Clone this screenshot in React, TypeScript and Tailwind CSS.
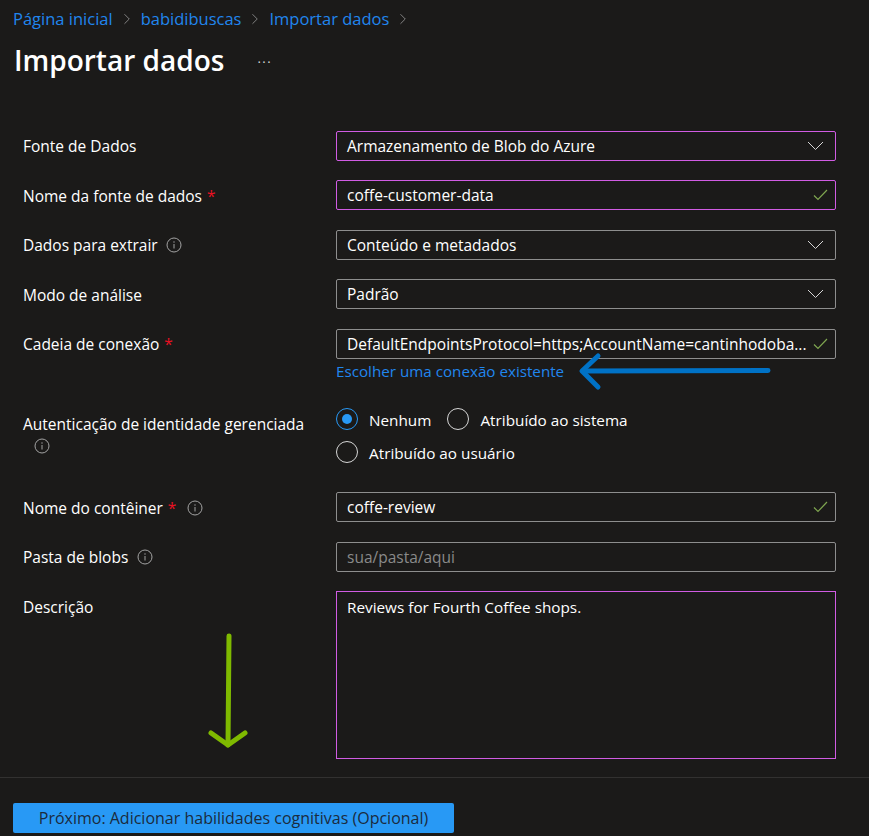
import { ChevronRight } from 'lucide-react'

function Info() {
  return (
    <svg width="16" height="16" viewBox="0 0 16 16" fill="none" className="shrink-0 text-[#a3a3a3]">
      <circle cx="8" cy="8" r="7" stroke="currentColor" />
      <path d="M8 7v4.5" stroke="currentColor" />
      <circle cx="8" cy="5" r="0.7" fill="currentColor" />
    </svg>
  )
}

function Caret() {
  return (
    <svg width="17" height="10" viewBox="0 0 17 10" fill="none" className="shrink-0">
      <path d="M1 1 8.5 8.5 16 1" stroke="#d6d6d6" strokeWidth="1" />
    </svg>
  )
}

function Check() {
  return (
    <svg width="15" height="12" viewBox="0 0 15 12" fill="none" className="shrink-0">
      <path d="M1 6.5 5 10.5 14 1" stroke="#7fa650" strokeWidth="1.2" />
    </svg>
  )
}

function Req() {
  return <span className="text-[#e81123] ml-[5px]">*</span>
}

function Field({ value, accent, end, muted }: { value: string; accent?: boolean; end?: 'caret' | 'check'; muted?: boolean }) {
  return (
    <div className={`w-[500px] h-[30px] flex items-center justify-between pl-[10px] pr-[7px] border rounded-[2px] ${accent ? 'border-[#d05ce3]' : 'border-[#8e8e8e]'}`}>
      <span className={`whitespace-nowrap ${muted ? 'text-[#8a8a8a]' : 'text-white'}`}>{value}</span>
      {end === 'caret' && <span className="mr-[4px]"><Caret /></span>}
      {end === 'check' && <Check />}
    </div>
  )
}

function Radio({ label, on }: { label: string; on?: boolean }) {
  return (
    <div className="flex items-center gap-[11px]">
      <div className={`w-[22px] h-[22px] rounded-full border flex items-center justify-center ${on ? 'border-[#2899f5]' : 'border-[#d6d6d6]'}`}>
        {on && <div className="w-[10px] h-[10px] rounded-full bg-[#2899f5]" />}
      </div>
      <span className="text-white text-[15.3px] leading-[20px] pt-[1px]">{label}</span>
    </div>
  )
}

export default function App() {
  return (
    <div className="relative w-[869px] h-[836px] overflow-hidden bg-[#1b1a19] text-white text-[15.5px] leading-[22px] font-['Open_Sans','Noto_Sans',sans-serif]">
      <div className="flex items-center h-[20px] pt-[9px] box-content ml-[13px] text-[#2186ee] text-[16.5px]">
        <span>Página inicial</span>
        <ChevronRight size={18} strokeWidth={1} className="text-[#a3a3a3] mx-[5px]" />
        <span>babidibuscas</span>
        <ChevronRight size={18} strokeWidth={1} className="text-[#a3a3a3] mx-[5px]" />
        <span>Importar dados</span>
        <ChevronRight size={18} strokeWidth={1} className="text-[#a3a3a3] mx-[5px]" />
      </div>

      <div className="flex items-center h-[40px] mt-[11px] ml-[14px]">
        <h1 className="text-[28px] font-semibold leading-none">Importar dados</h1>
        <span className="ml-[33px] mb-[3px] text-[#d6d6d6] text-[13px] leading-none tracking-[1.5px]">...</span>
      </div>

      <div className="mt-[51px] ml-[23px] flex flex-col">
        <div className="flex items-center">
          <div className="w-[313px]">Fonte de Dados</div>
          <Field value="Armazenamento de Blob do Azure" accent end="caret" />
        </div>
        <div className="flex items-center mt-[19px]">
          <div className="w-[313px] pt-[1px]">Nome da fonte de dados<Req /></div>
          <Field value="coffe-customer-data" accent end="check" />
        </div>
        <div className="flex items-center mt-[20px]">
          <div className="w-[313px] flex items-center gap-[8px]">Dados para extrair <Info /></div>
          <Field value="Conteúdo e metadados" end="caret" />
        </div>
        <div className="flex items-center mt-[19px]">
          <div className="w-[313px] pt-[1px]">Modo de análise</div>
          <Field value="Padrão" end="caret" />
        </div>
        <div className="flex items-start mt-[20px]">
          <div className="w-[313px] leading-[30px]">Cadeia de conexão<Req /></div>
          <div>
            <Field value="DefaultEndpointsProtocol=https;AccountName=cantinhodoba..." end="check" />
            <div className="mt-[2px] text-[#2186ee] text-[15.2px] leading-[20px]">Escolher uma conexão existente</div>
          </div>
        </div>
        <div className="flex items-start mt-[27px]">
          <div className="w-[313px] pt-[6px]">
            <div className="leading-[20px]">Autenticação de identidade gerenciada</div>
            <div className="mt-[4px] ml-[11px]"><Info /></div>
          </div>
          <div className="flex flex-col gap-[11px]">
            <div className="flex gap-[16px]">
              <Radio label="Nenhum" on />
              <Radio label="Atribuído ao sistema" />
            </div>
            <Radio label="Atribuído ao usuário" />
          </div>
        </div>
        <div className="flex items-center mt-[29px]">
          <div className="w-[313px] flex items-center pt-[1px]">Nome do contêiner<Req /><span className="ml-[11px]"><Info /></span></div>
          <Field value="coffe-review" end="check" />
        </div>
        <div className="flex items-center mt-[20px]">
          <div className="w-[313px] flex items-center gap-[9px]">Pasta de blobs <Info /></div>
          <Field value="sua/pasta/aqui" muted />
        </div>
        <div className="flex items-start mt-[19px]">
          <div className="w-[313px] pt-[5px]">Descrição</div>
          <div className="w-[500px] h-[168px] border border-[#d05ce3] pl-[10px] pt-[4px] text-[15.3px]">Reviews for Fourth Coffee shops.</div>
        </div>
      </div>

      <div className="mt-[18px] border-t border-[#323130]" />

      <button className="block mt-[25px] ml-[13px] w-[441px] h-[30px] rounded-[2px] bg-[#2899f5] text-[#1b2b3d] text-[16px] font-medium">
        Próximo: Adicionar habilidades cognitivas (Opcional)
      </button>

      {/* blue annotation arrow */}
      <svg className="absolute left-[568px] top-[350px]" width="210" height="44" viewBox="0 0 210 44" fill="none">
        <path d="M200 20.5 16 21" stroke="#0072c6" strokeWidth="5" strokeLinecap="round" />
        <path d="M30 6 14 21 30 37" stroke="#0072c6" strokeWidth="5" strokeLinecap="round" strokeLinejoin="round" />
      </svg>
      {/* green annotation arrow */}
      <svg className="absolute left-[200px] top-[625px]" width="56" height="130" viewBox="0 0 56 130" fill="none">
        <path d="M29 11 28 120" stroke="#7fba00" strokeWidth="5" strokeLinecap="round" />
        <path d="M11 108 28 120 45 108" stroke="#7fba00" strokeWidth="5" strokeLinecap="round" strokeLinejoin="round" />
      </svg>
    </div>
  )
}
